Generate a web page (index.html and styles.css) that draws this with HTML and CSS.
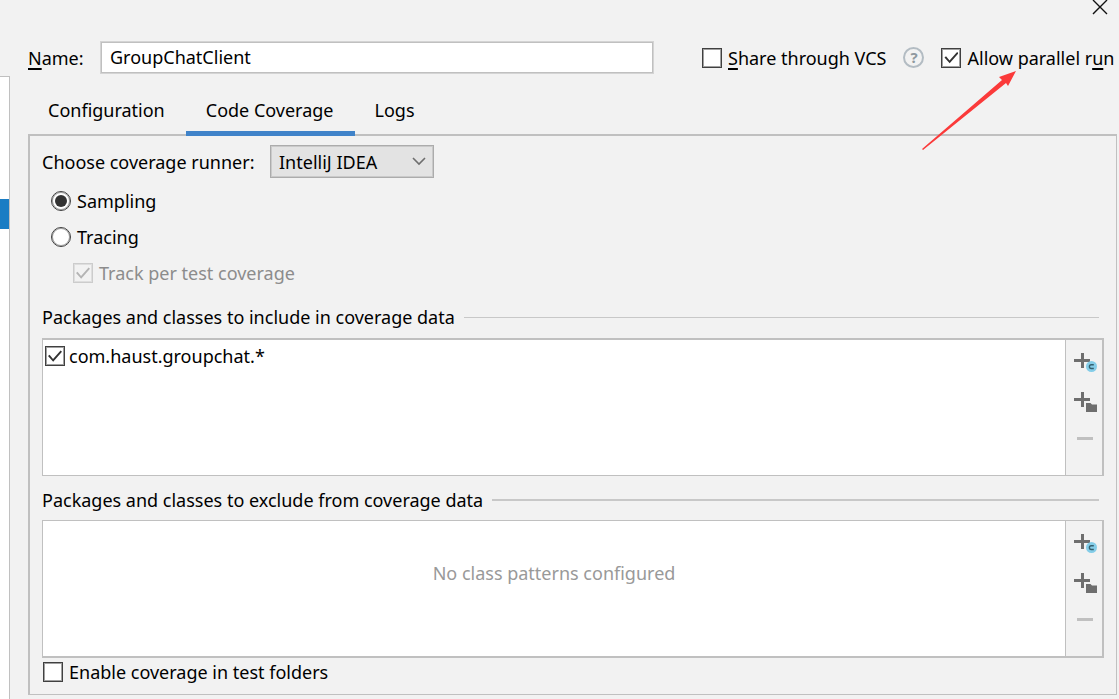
FILE: index.html
```html
<!DOCTYPE html>
<html lang="en">
<head>
<meta charset="utf-8">
<title>Run/Debug Configurations</title>
<link rel="stylesheet" href="styles.css">
</head>
<body>
<svg class="symbols" aria-hidden="true">
  <symbol id="add-class" viewBox="0 0 24 24">
    <path d="M8 1h3v6h6v3h-6v6H8v-6H1V7h7z" fill="#6e6e6e"/>
    <circle cx="18.500" cy="14.500" r="5.500" fill="#84cde8"/>
    <path d="M20.800 12.700h-2.600q-1.800 0-1.800 1.900t1.800 1.900h2.600" fill="none" stroke="#35606f" stroke-width="1.400"/>
  </symbol>
  <symbol id="add-package" viewBox="0 0 24 24">
    <path d="M8 1h3v6h6v3h-6v6H8v-6H1V7h7z" fill="#6e6e6e"/>
    <path d="M13 12h4.500l1.500 1.500H24V21H13z" fill="#6e6e6e"/>
  </symbol>
  <symbol id="remove" viewBox="0 0 24 24">
    <path d="M4 7h16v3H4z" fill="#c0c0c0"/>
  </symbol>
</svg>
<div class="dialog">
  <aside class="tree"><div class="tree-selection"></div></aside>
  <main class="editor">
    <header class="titlebar">
      <button class="close" type="button" aria-label="Close">
        <svg width="16" height="16" viewBox="0 0 16 16"><path d="M1 0l14 14M15 0L1 14" stroke="#111" stroke-width="1.400" fill="none"/></svg>
      </button>
    </header>
    <div class="name-row">
      <label class="name-label" for="name"><u>N</u>ame:</label>
      <input class="name-input" id="name" type="text" value="GroupChatClient">
      <div class="options">
        <label class="choice"><input class="box" type="checkbox"><span><u>S</u>hare through VCS</span></label>
        <button class="help" type="button" aria-label="Help">?</button>
        <label class="choice"><input class="box" type="checkbox" checked><span>Allow parallel r<u>u</u>n</span></label>
      </div>
    </div>
    <nav class="tabs">
      <button class="tab" type="button">Configuration</button>
      <button class="tab tab-active" type="button">Code Coverage</button>
      <button class="tab" type="button">Logs</button>
    </nav>
    <section class="panel">
      <div class="runner">
        <label class="runner-label" for="runner">Choose coverage runner:</label>
        <div class="select-wrap">
          <select class="select" id="runner"><option>IntelliJ IDEA</option></select>
          <svg class="chevron" width="14" height="9" viewBox="0 0 14 9"><path d="M1 1l6 6 6-6" fill="none" stroke="#6e6e6e" stroke-width="1.600"/></svg>
        </div>
      </div>
      <div class="modes">
        <label class="choice mode"><input class="radio" type="radio" name="mode" checked><span>Sampling</span></label>
        <label class="choice mode"><input class="radio" type="radio" name="mode"><span>Tracing</span></label>
        <label class="choice mode mode-sub"><input class="box" type="checkbox" checked disabled><span>Track per test coverage</span></label>
      </div>
      <h2 class="group-title">Packages and classes to include in coverage data</h2>
      <div class="list list-include">
        <div class="list-body">
          <label class="choice list-item"><input class="box" type="checkbox" checked><span>com.haust.groupchat.*</span></label>
        </div>
        <div class="toolbar">
          <button class="tool" type="button" aria-label="Add class"><svg width="24" height="24"><use href="#add-class"/></svg></button>
          <button class="tool" type="button" aria-label="Add package"><svg width="24" height="24"><use href="#add-package"/></svg></button>
          <button class="tool" type="button" aria-label="Remove" disabled><svg width="24" height="24"><use href="#remove"/></svg></button>
        </div>
      </div>
      <h2 class="group-title group-title-heavy">Packages and classes to exclude from coverage data</h2>
      <div class="list list-exclude">
        <div class="list-body list-empty">No class patterns configured</div>
        <div class="toolbar">
          <button class="tool" type="button" aria-label="Add class"><svg width="24" height="24"><use href="#add-class"/></svg></button>
          <button class="tool" type="button" aria-label="Add package"><svg width="24" height="24"><use href="#add-package"/></svg></button>
          <button class="tool" type="button" aria-label="Remove" disabled><svg width="24" height="24"><use href="#remove"/></svg></button>
        </div>
      </div>
      <label class="choice test-folders"><input class="box" type="checkbox"><span>Enable coverage in test folders</span></label>
    </section>
  </main>
  <svg class="arrow" width="96" height="82" viewBox="0 0 96 82" aria-hidden="true"><path d="M0 79L80 10 77 7 94 1 86 16 84 13 1 80z" fill="#fb3a3a"/></svg>
</div>
</body>
</html>
```
FILE: styles.css
```css
* {
  box-sizing: border-box;
}

body {
  margin: 0;
  background: #f2f2f2;
  color: #000;
  font: 18px/24px "Noto Sans", "Open Sans", sans-serif;
  overflow: hidden;
}

button,
input,
select {
  font: inherit;
  color: inherit;
  margin: 0;
}

button {
  padding: 0;
  border: 0;
  background: none;
}

.symbols {
  display: none;
}

.dialog {
  position: relative;
  display: flex;
  min-height: 100vh;
}

.tree {
  flex: none;
  width: 10px;
  margin-top: 76px;
  padding-top: 122px;
  border: solid #c0c0c0;
  border-width: 1px 1px 0 0;
  background: #fff;
}

.tree-selection {
  height: 30px;
  background: #1a7dc4;
}

.editor {
  flex: 1;
  min-width: 0;
  padding: 0 2px 4px 18px;
}

.titlebar {
  display: flex;
  justify-content: flex-end;
  height: 41px;
  padding-right: 9px;
}

.close {
  height: 16px;
}

.close svg,
.tool svg {
  display: block;
}

.name-row {
  display: flex;
  align-items: center;
  height: 33px;
  white-space: nowrap;
}

.name-label {
  flex: none;
  width: 72px;
}

u {
  text-underline-offset: 3px;
  text-decoration-thickness: 2px;
}

.name-input {
  flex: 1;
  min-width: 0;
  height: 33px;
  padding: 0 9px 2px;
  border: 1px solid #d4d4d4;
  box-shadow: inset 0 0 0 1px #c0c0c0;
  background: #fff;
}

.options {
  flex: none;
  display: flex;
  align-items: center;
  gap: 17px;
  width: 463px;
  padding-left: 48px;
}

.choice {
  display: flex;
  align-items: center;
  gap: 6px;
  white-space: nowrap;
}

.box,
.radio {
  appearance: none;
  flex: none;
  display: grid;
  place-items: center;
  width: 20px;
  height: 20px;
  border: 1px solid #404040;
  box-shadow: inset 0 0 0 1px #a0a0a0;
  background: #fff;
}

.box:checked::before {
  content: "";
  width: 14px;
  height: 12px;
  background: #333;
  clip-path: polygon(0 50%, 11% 40%, 36% 74%, 90% 4%, 100% 14%, 37% 97%);
}

.box:disabled {
  border-color: #ccc;
  box-shadow: inset 0 0 0 1px #dedede;
  background: #f2f2f2;
}

.box:disabled::before {
  background: #b4b4b4;
}

.box:disabled + span {
  color: #8c8c8c;
}

.radio {
  border-radius: 50%;
}

.radio:checked::before {
  content: "";
  width: 12px;
  height: 12px;
  border-radius: 50%;
  background: #333;
}

.help {
  width: 21px;
  height: 21px;
  border: 2px solid #b3bcc3;
  border-radius: 50%;
  color: #8f999f;
  font-size: 15px;
  font-weight: 700;
  line-height: 17px;
}

.tabs {
  position: relative;
  z-index: 1;
  display: flex;
  height: 62px;
}

.tab {
  height: 62px;
  padding: 14px 21px 0 20px;
  border-bottom: 5px solid transparent;
}

.tab-active {
  border-color: #4083c9;
}

.panel {
  margin-top: -2px;
  padding: 9px 12px 8px 12px;
  border: solid #c0c0c0;
  border-width: 2px 1px 1px 2px;
}

.runner {
  display: flex;
  align-items: center;
}

.runner-label {
  min-width: 228px;
}

.select-wrap {
  position: relative;
}

.select {
  appearance: none;
  display: block;
  width: 164px;
  height: 33px;
  padding: 0 8px;
  border: 1px solid #acacac;
  border-radius: 0;
  box-shadow: inset 0 0 0 1px #cacaca;
  background: #e3e3e3;
}

.chevron {
  position: absolute;
  right: 8px;
  top: 12px;
  pointer-events: none;
}

.modes {
  padding: 5px 0 13px 9px;
}

.mode {
  height: 36px;
}

.mode-sub {
  padding-left: 22px;
}

.group-title {
  display: flex;
  align-items: center;
  gap: 9px;
  height: 26px;
  margin: 0 5px 8px 0;
  font: inherit;
  white-space: nowrap;
}

.group-title::after {
  content: "";
  flex: 1;
  height: 1px;
  background: #c8c8c8;
}

.group-title-heavy {
  margin: 11px 5px 7px 0;
}

.group-title-heavy::after {
  height: 2px;
}

.list {
  display: flex;
  height: 138px;
  border: 1px solid #c0c0c0;
  border-right-width: 2px;
}

.list-include {
  border-top-width: 2px;
}

.list-exclude {
  border-bottom-width: 2px;
}

.list-body {
  flex: 1;
  padding: 4px 2px;
  background: #fff;
}

.list-item {
  gap: 4px;
}

.list-empty {
  display: grid;
  place-items: center;
  padding-bottom: 36px;
  color: #999;
}

.toolbar {
  display: flex;
  flex-direction: column;
  align-items: center;
  gap: 15px;
  width: 37px;
  padding: 12px 0 0 2px;
  border-left: 1px solid #c0c0c0;
}

.test-folders {
  height: 28px;
  padding-left: 1px;
}

.arrow {
  position: absolute;
  left: 922px;
  top: 70px;
  pointer-events: none;
}
```
